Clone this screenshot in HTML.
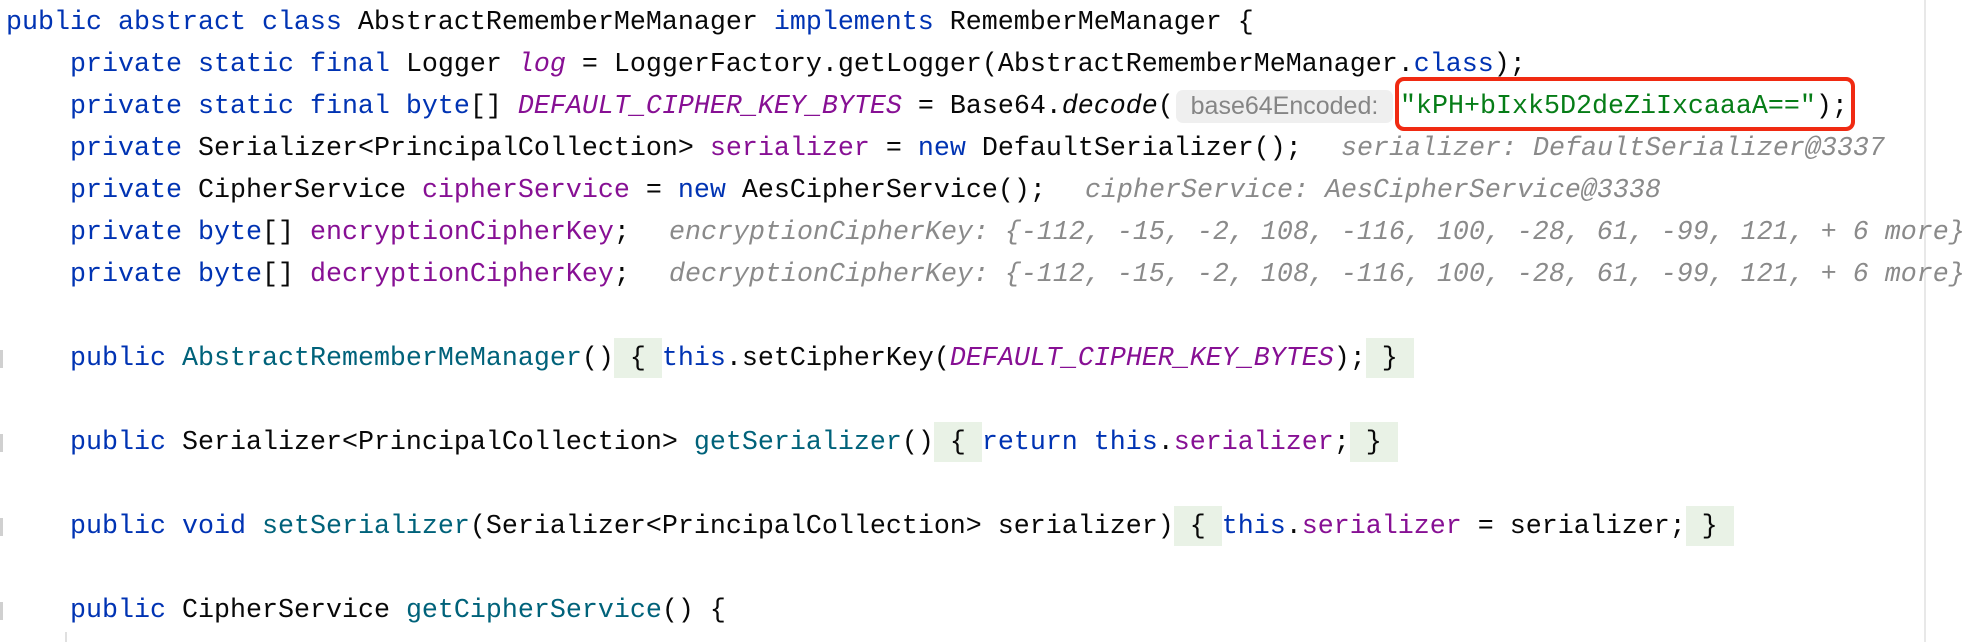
<!DOCTYPE html>
<html><head><meta charset="utf-8"><style>
html,body{margin:0;padding:0;background:#fff;width:1978px;height:642px;overflow:hidden;position:relative}
.l{position:absolute;left:6px;height:42px;line-height:42px;white-space:pre;font-family:"Liberation Mono",monospace;font-size:26.67px;color:#080808}
.k{color:#0033b3}.f{color:#871094}.fi{color:#871094;font-style:italic}.m{color:#00627a}.s{color:#067d17}.i{font-style:italic}
.h{color:#8a8a8a;font-style:italic}
.fold{background:#e9f2e6;display:inline-block;height:40px;vertical-align:top}
.inl{position:absolute;left:1176px;top:90px;width:217px;height:33px;background:#efefef;border-radius:7px;font-family:"Liberation Sans",sans-serif;font-size:25px;color:#858585;line-height:33px;text-align:center}
.box{position:absolute;left:1395px;top:77px;width:452px;height:46px;border:4px solid #f02a12;border-radius:9px}
.ruler{position:absolute;left:1924px;top:0;width:2px;height:642px;background:#e8e8e8}
.g{position:absolute;left:0;width:3px;height:18px;background:#d0d0d0}
</style></head><body>
<div class="ruler"></div>
<div class="l" style="top:2px"><span class="k">public abstract class </span>AbstractRememberMeManager <span class="k">implements</span> RememberMeManager {</div>
<div class="l" style="top:44px">    <span class="k">private static final </span>Logger <span class="fi">log</span> = LoggerFactory.getLogger(AbstractRememberMeManager.<span class="k">class</span>);</div>
<div class="l" style="top:86px">    <span class="k">private static final byte</span>[] <span class="fi">DEFAULT_CIPHER_KEY_BYTES</span> = Base64.<span class="i">decode</span>(</div>
<div class="inl">base64Encoded:</div>
<div class="l" style="top:86px;left:1400px"><span class="s">"kPH+bIxk5D2deZiIxcaaaA=="</span>);</div>
<div class="box"></div>
<div class="l" style="top:128px">    <span class="k">private </span>Serializer&lt;PrincipalCollection&gt; <span class="f">serializer</span> = <span class="k">new </span>DefaultSerializer();</div>
<div class="l h" style="top:128px;left:1341px">serializer: DefaultSerializer@3337</div>
<div class="l" style="top:170px">    <span class="k">private </span>CipherService <span class="f">cipherService</span> = <span class="k">new </span>AesCipherService();</div>
<div class="l h" style="top:170px;left:1085px">cipherService: AesCipherService@3338</div>
<div class="l" style="top:212px">    <span class="k">private byte</span>[] <span class="f">encryptionCipherKey</span>;</div>
<div class="l h" style="top:212px;left:669px">encryptionCipherKey: {-112, -15, -2, 108, -116, 100, -28, 61, -99, 121, + 6 more}</div>
<div class="l" style="top:254px">    <span class="k">private byte</span>[] <span class="f">decryptionCipherKey</span>;</div>
<div class="l h" style="top:254px;left:669px">decryptionCipherKey: {-112, -15, -2, 108, -116, 100, -28, 61, -99, 121, + 6 more}</div>
<div class="g" style="top:350px"></div>
<div class="l" style="top:338px">    <span class="k">public </span><span class="m">AbstractRememberMeManager</span>()<span class="fold"> { </span><span class="k">this</span>.setCipherKey(<span class="fi">DEFAULT_CIPHER_KEY_BYTES</span>);<span class="fold"> } </span></div>
<div class="g" style="top:434px"></div>
<div class="l" style="top:422px">    <span class="k">public </span>Serializer&lt;PrincipalCollection&gt; <span class="m">getSerializer</span>()<span class="fold"> { </span><span class="k">return this</span>.<span class="f">serializer</span>;<span class="fold"> } </span></div>
<div class="g" style="top:518px"></div>
<div class="l" style="top:506px">    <span class="k">public void </span><span class="m">setSerializer</span>(Serializer&lt;PrincipalCollection&gt; serializer)<span class="fold"> { </span><span class="k">this</span>.<span class="f">serializer</span> = serializer;<span class="fold"> } </span></div>
<div class="g" style="top:602px"></div>
<div class="l" style="top:590px">    <span class="k">public </span>CipherService <span class="m">getCipherService</span>() {</div>
<div style="position:absolute;left:65px;top:632px;width:2px;height:10px;background:#e0e0e0"></div>
</body></html>
